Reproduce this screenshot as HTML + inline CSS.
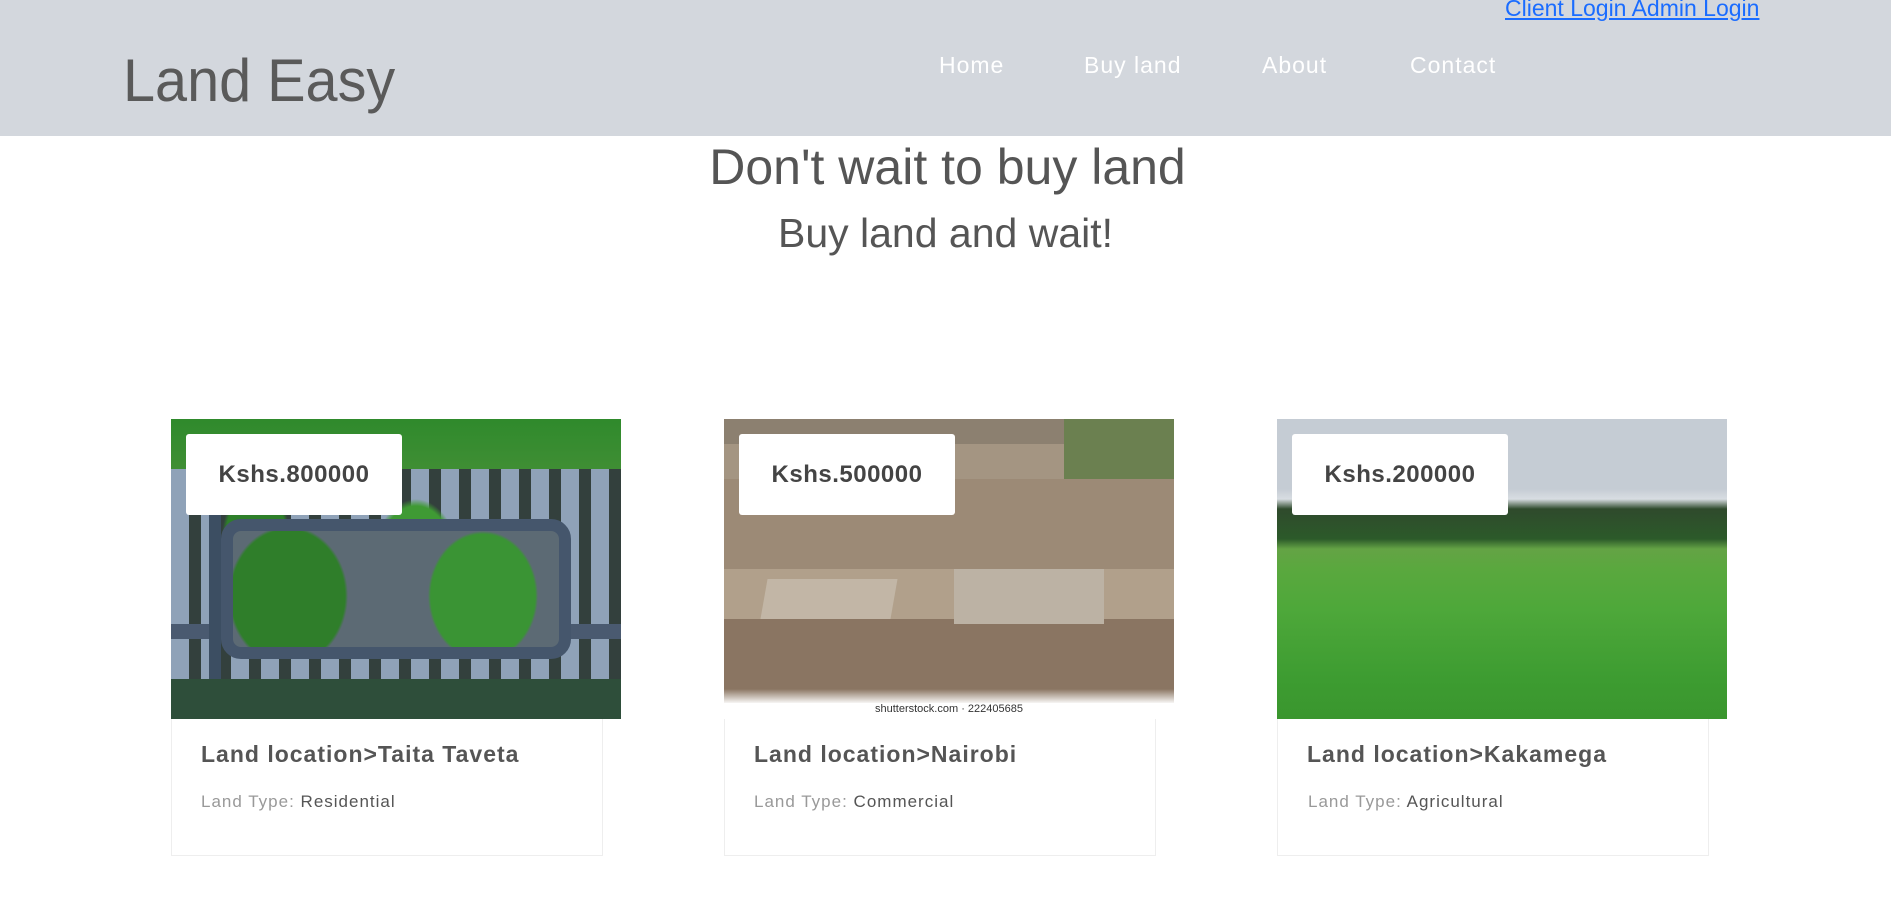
<!DOCTYPE html>
<html><head><meta charset="utf-8"><style>
*{margin:0;padding:0;box-sizing:border-box}
body{width:1891px;height:904px;background:#fff;font-family:"Liberation Sans",sans-serif;position:relative;overflow:hidden}
.hdr{position:absolute;left:0;top:0;width:1891px;height:136px;background:#d3d7dd}
.logo{position:absolute;left:123px;top:46px;font-size:60px;color:#5a5a5a;letter-spacing:0px;transform:scaleX(0.96);transform-origin:left}
.nav{position:absolute;top:52px;font-size:23px;color:#fff;letter-spacing:1px}
.login{position:absolute;top:-5px;left:1505px;font-size:23px;color:#1a6cff;text-decoration:underline;white-space:nowrap}
.h1{position:absolute;top:138px;width:1891px;text-align:center;font-size:50px;color:#555;left:2px}
.h2{position:absolute;top:210px;width:1891px;text-align:center;font-size:41px;color:#555}
.card{position:absolute;top:419px;width:450px}
.img{width:450px;height:300px;position:relative}
.body{width:432px;height:137px;border:1px solid #eee;border-top:none}
.price{position:absolute;left:15px;top:15px;width:216px;height:81px;background:#fff;border-radius:3px;font-weight:bold;font-size:24px;color:#444;text-align:center;line-height:81px;letter-spacing:0.5px}
.t{position:absolute;left:30px;top:322px;font-weight:bold;font-size:23px;color:#555;letter-spacing:1px;white-space:nowrap}
.ty{position:absolute;left:30px;top:792px;font-size:17px;color:#999;letter-spacing:1px}
.ty b{font-weight:normal;color:#555}
</style></head><body>
<div class="hdr">
<div class="logo">Land Easy</div>
<div class="nav" style="left:939px">Home</div>
<div class="nav" style="left:1084px">Buy land</div>
<div class="nav" style="left:1262px">About</div>
<div class="nav" style="left:1410px">Contact</div>
<div class="login">Client Login Admin Login</div>
</div>
<div class="h1">Don't wait to buy land</div>
<div class="h2">Buy land and wait!</div>

<div class="card" style="left:171px">
<div class="img" style="background:
linear-gradient(90deg,transparent 0 38px,#3c4e62 38px 50px,transparent 50px 100%),
linear-gradient(0deg,transparent 0 80px,#4a5a70 80px 95px,transparent 95px 100%),
radial-gradient(ellipse 45px 70px at 245px 150px,#3f9a34 90%,transparent 100%),
radial-gradient(ellipse 35px 70px at 85px 130px,#2e7f2a 90%,transparent 100%),
repeating-linear-gradient(90deg,#8fa2b8 0 18px,#33403d 18px 30px),
#2d5a35">
<div style="position:absolute;left:0;top:0;width:450px;height:50px;background:linear-gradient(#2f8a2c,#3f8e34)"></div>
<div style="position:absolute;left:0;top:260px;width:450px;height:40px;background:#2e4e3a"></div>
<div style="position:absolute;left:50px;top:100px;width:350px;height:140px;border:12px solid #45566c;border-radius:20px;background:radial-gradient(ellipse 60px 70px at 55px 65px,#2f7e2a 95%,transparent 100%),radial-gradient(ellipse 55px 65px at 250px 65px,#3a9434 95%,transparent 100%),#5c6a74"></div>
<div class="price">Kshs.800000</div></div>
<div class="body"></div>
<div class="t">Land location&gt;Taita Taveta</div>
</div>

<div class="card" style="left:724px">
<div class="img" style="background:linear-gradient(180deg,#8c8070 0 25px,#a49582 25px 60px,#9c8a76 60px 150px,#b1a08b 150px 200px,#8a7562 200px 270px,#fff 285px)">
<div style="position:absolute;left:40px;top:160px;width:130px;height:40px;background:#c2b6a6;transform:skewX(-10deg)"></div>
<div style="position:absolute;left:230px;top:150px;width:150px;height:55px;background:#bcb2a4"></div>
<div style="position:absolute;left:340px;top:0;width:110px;height:60px;background:#6b8050"></div>
<div style="position:absolute;left:0;top:284px;width:450px;height:16px;background:#fff;font-size:11px;color:#333;text-align:center">shutterstock.com · 222405685</div>
<div class="price">Kshs.500000</div></div>
<div class="body"></div>
<div class="t">Land location&gt;Nairobi</div>
</div>

<div class="card" style="left:1277px">
<div class="img" style="background:linear-gradient(180deg,#c5ccd4 0 70px,#d8dde2 80px,#2f4a2c 90px,#2c5a2a 120px,#64a345 130px,#5aa83e 150px,#4ea83a 190px,#3d9c31 260px,#3a962e 300px)">
<div class="price">Kshs.200000</div></div>
<div class="body"></div>
<div class="t">Land location&gt;Kakamega</div>
</div>

<div class="ty" style="left:201px">Land Type: <b>Residential</b></div>
<div class="ty" style="left:754px">Land Type: <b>Commercial</b></div>
<div class="ty" style="left:1308px">Land Type: <b>Agricultural</b></div>
</body></html>
